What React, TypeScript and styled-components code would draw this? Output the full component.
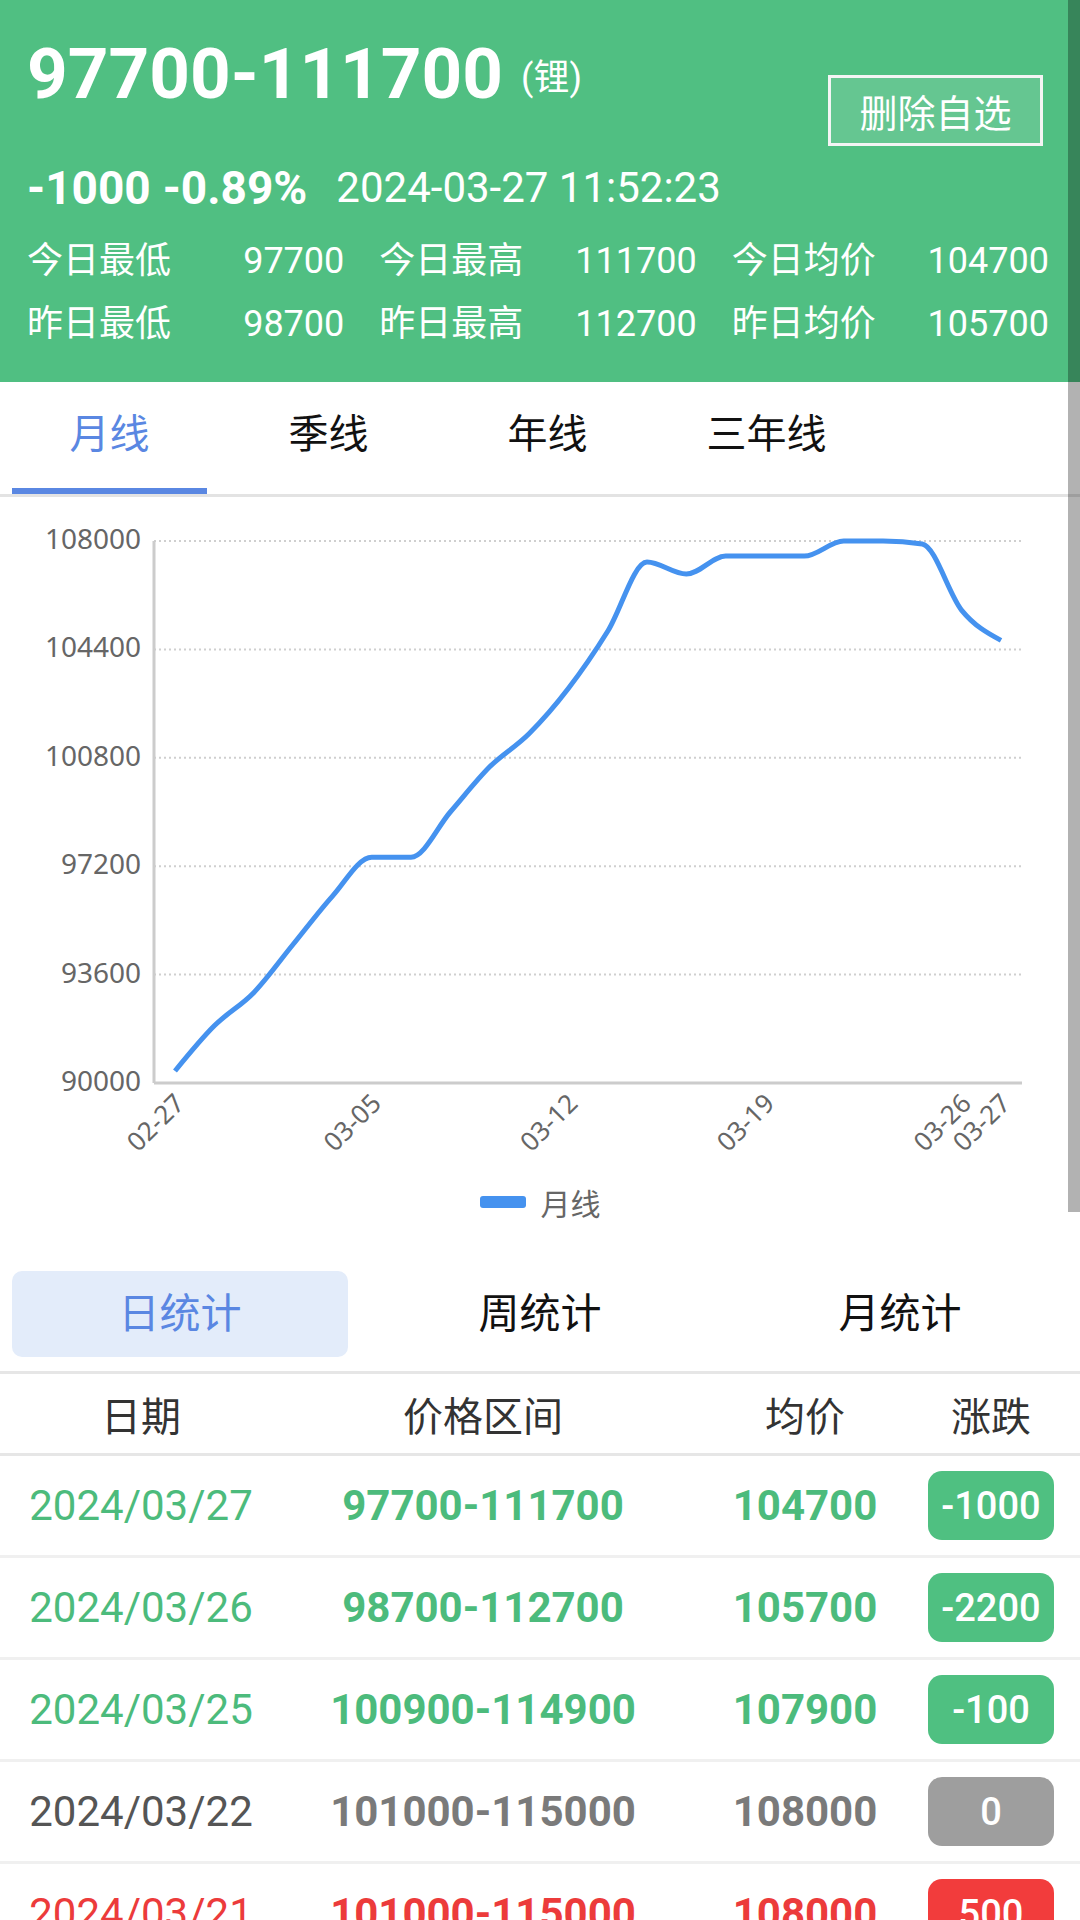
import React from "react";
import styled, { createGlobalStyle } from "styled-components";

const GREEN = "#50bf82";
const TEXT_GREEN = "#4cbb7c";
const RED = "#ec3b3b";
const BLUE = "#5a87e2";
const LINE_BLUE = "#4592ef";

const GlobalStyle = createGlobalStyle`
  html, body {
    margin: 0;
    padding: 0;
    background: #fff;
  }
  body {
    width: 1080px;
    height: 1920px;
    overflow: hidden;
    font-family: Roboto, "Noto Sans CJK SC", sans-serif;
    color: #111;
  }
`;

const Page = styled.div`
  width: 1080px;
`;

/* ---------- header ---------- */

const Header = styled.header`
  box-sizing: border-box;
  height: 382px;
  background: ${GREEN};
  color: #fff;
  padding: 24px 31px 0 27px;
`;

const TopRow = styled.div`
  display: flex;
  justify-content: space-between;
  align-items: flex-start;
`;

const Title = styled.h1`
  margin: 0;
  font-size: 71px;
  font-weight: 700;
  line-height: 100px;
  white-space: nowrap;
`;

const Unit = styled.span`
  font-size: 36px;
  font-weight: 400;
  margin-left: 18px;
  vertical-align: 8px;
`;

const Button = styled.button`
  box-sizing: border-box;
  margin-top: 51px;
  margin-right: 6px;
  width: 215px;
  height: 71px;
  border: 3px solid #f4f4f4;
  background: rgba(255, 255, 255, 0.12);
  color: #fff;
  font-family: inherit;
  font-size: 38px;
  padding: 0;
`;

const ChangeRow = styled.div`
  margin-top: 30px;
  height: 60px;
  display: flex;
  align-items: center;
  white-space: nowrap;
`;

const Change = styled.span`
  font-size: 46px;
  font-weight: 700;
  line-height: 60px;
  margin-right: 12px;
`;

const Time = styled.span`
  font-size: 42px;
  line-height: 60px;
  margin-left: 17px;
`;

const Stats = styled.div`
  margin-top: 12px;
  display: grid;
  grid-template-columns: repeat(3, 1fr);
  column-gap: 35px;
`;

const Stat = styled.div`
  display: flex;
  justify-content: space-between;
  font-size: 36px;
  line-height: 63px;
`;

/* ---------- period tabs ---------- */

const TabBar = styled.nav`
  display: flex;
  border-bottom: 3px solid #e3e3e3;
`;

const Tab = styled.div<{ $active?: boolean }>`
  flex: none;
  width: 219px;
  display: flex;
  flex-direction: column;
  align-items: stretch;
  font-size: 40px;
  color: ${(p) => (p.$active ? BLUE : "#111")};
`;

const TabLabel = styled.span`
  line-height: 106px;
  text-align: center;
`;

const TabLine = styled.span<{ $active?: boolean }>`
  height: 6px;
  margin: 0 12px;
  background: ${(p) => (p.$active ? BLUE : "transparent")};
`;

/* ---------- chart ---------- */

const ChartSvg = styled.svg`
  display: block;
  font-family: "Noto Sans", sans-serif;
`;

const Legend = styled.div`
  display: flex;
  justify-content: center;
  align-items: center;
  height: 70px;
  font-size: 30px;
  color: #666;
`;

const LegendMark = styled.span`
  width: 46px;
  height: 12px;
  border-radius: 3px;
  background: ${LINE_BLUE};
  margin-right: 15px;
`;

/* ---------- statistics segment ---------- */

const Segment = styled.div`
  display: grid;
  grid-template-columns: repeat(3, 1fr);
  padding: 34px 0 14px;
  border-bottom: 3px solid #e6e6e6;
`;

const SegItem = styled.div<{ $active?: boolean }>`
  margin: 0 12px;
  height: 86px;
  line-height: 86px;
  text-align: center;
  border-radius: 10px;
  font-size: 41px;
  background: ${(p) => (p.$active ? "#e3ecfa" : "transparent")};
  color: ${(p) => (p.$active ? BLUE : "#111")};
`;

/* ---------- table ---------- */

const Columns = `
  display: grid;
  grid-template-columns: 282px 402px 242px 130px;
  align-items: center;
  justify-items: center;
`;

const HeadRow = styled.div`
  ${Columns}
  height: 79px;
  border-bottom: 3px solid #e6e6e6;
  font-size: 40px;
  color: #333;
`;

const Row = styled.div`
  ${Columns}
  height: 99px;
  border-bottom: 3px solid #f0f0f0;
`;

const DateCell = styled.span<{ $color: string }>`
  font-size: 42px;
  color: ${(p) => p.$color};
`;

const NumCell = styled.span<{ $color: string }>`
  font-size: 42px;
  font-weight: 700;
  color: ${(p) => p.$color};
`;

const Badge = styled.span<{ $bg: string }>`
  width: 126px;
  height: 69px;
  border-radius: 14px;
  background: ${(p) => p.$bg};
  color: #fff;
  font-size: 38px;
  font-weight: 500;
  display: flex;
  align-items: center;
  justify-content: center;
`;

const ScrollThumb = styled.div`
  position: fixed;
  top: 0;
  right: 0;
  width: 12px;
  height: 1212px;
  background: rgba(0, 0, 0, 0.3);
`;

/* ---------- data ---------- */

const stats = [
  ["今日最低", "97700", "今日最高", "111700", "今日均价", "104700"],
  ["昨日最低", "98700", "昨日最高", "112700", "昨日均价", "105700"],
];

const tabs = ["月线", "季线", "年线", "三年线"];

const series = [
  90400, 91900, 93000, 94600, 96200, 97500, 97500, 99000, 100500, 101600,
  103100, 105000, 107300, 106900, 107500, 107500, 107500, 108000, 108000,
  107900, 105700, 104700,
];

const xTicks: [number, string][] = [
  [0, "02-27"],
  [5, "03-05"],
  [10, "03-12"],
  [15, "03-19"],
  [20, "03-26"],
  [21, "03-27"],
];

const yTicks = [108000, 104400, 100800, 97200, 93600, 90000];

type Tone = "up" | "down" | "flat";

const rows: { date: string; range: string; avg: string; diff: string; tone: Tone }[] = [
  { date: "2024/03/27", range: "97700-111700", avg: "104700", diff: "-1000", tone: "down" },
  { date: "2024/03/26", range: "98700-112700", avg: "105700", diff: "-2200", tone: "down" },
  { date: "2024/03/25", range: "100900-114900", avg: "107900", diff: "-100", tone: "down" },
  { date: "2024/03/22", range: "101000-115000", avg: "108000", diff: "0", tone: "flat" },
  { date: "2024/03/21", range: "101000-115000", avg: "108000", diff: "500", tone: "up" },
];

const toneColors: Record<Tone, { date: string; num: string; badge: string }> = {
  down: { date: TEXT_GREEN, num: TEXT_GREEN, badge: "#4fc081" },
  flat: { date: "#555", num: "#7a7a7a", badge: "#9e9e9e" },
  up: { date: RED, num: RED, badge: "#f23c3c" },
};

/* ---------- chart geometry ---------- */

const PLOT_L = 154;
const PLOT_R = 1022;
const PLOT_T = 541;
const PLOT_B = 1083;
const X0 = 175;
const X_STEP = (1001 - 175) / 21;

const yOf = (v: number) => PLOT_T + ((108000 - v) / 18000) * (PLOT_B - PLOT_T);
const xOf = (i: number) => X0 + i * X_STEP;

// monotone cubic interpolation, so flat stretches stay flat
function smoothPath(values: number[]) {
  const pts = values.map((v, i) => ({ x: xOf(i), y: yOf(v) }));
  const n = pts.length;
  const h = X_STEP;
  const s = pts.slice(0, -1).map((p, i) => (pts[i + 1].y - p.y) / h);
  const m: number[] = new Array(n).fill(0);
  for (let i = 1; i < n - 1; i++) {
    const a = s[i - 1];
    const b = s[i];
    if (a * b <= 0) m[i] = 0;
    else m[i] = (Math.sign(a) + Math.sign(b)) * Math.min(Math.abs(a), Math.abs(b), 0.5 * Math.abs((a + b) / 2));
  }
  m[0] = (3 * s[0] - m[1]) / 2;
  m[n - 1] = (3 * s[n - 2] - m[n - 2]) / 2;
  let d = `M${pts[0].x.toFixed(1)},${pts[0].y.toFixed(1)}`;
  for (let i = 0; i < n - 1; i++) {
    const p1 = pts[i];
    const p2 = pts[i + 1];
    const c1x = p1.x + h / 3;
    const c1y = p1.y + (m[i] * h) / 3;
    const c2x = p2.x - h / 3;
    const c2y = p2.y - (m[i + 1] * h) / 3;
    d += ` C${c1x.toFixed(1)},${c1y.toFixed(1)} ${c2x.toFixed(1)},${c2y.toFixed(1)} ${p2.x.toFixed(1)},${p2.y.toFixed(1)}`;
  }
  return d;
}

const PriceChart: React.FC = () => (
  <ChartSvg width={1080} height={670} viewBox="0 497 1080 670">
    {yTicks.map((v) => (
      <g key={v}>
        {v !== 90000 && (
          <line
            x1={PLOT_L}
            x2={PLOT_R}
            y1={yOf(v)}
            y2={yOf(v)}
            stroke="#cfcfcf"
            strokeWidth={2}
            strokeDasharray="2 3"
          />
        )}
        <text x={141} y={yOf(v) + 8} textAnchor="end" fontSize={28} fill="#666">
          {v}
        </text>
      </g>
    ))}
    <line x1={PLOT_L} x2={PLOT_L} y1={PLOT_T} y2={PLOT_B} stroke="#cccccc" strokeWidth={3} />
    <line x1={PLOT_L} x2={PLOT_R} y1={PLOT_B} y2={PLOT_B} stroke="#cccccc" strokeWidth={3} />
    {xTicks.map(([i, label]) => {
      const ax = xOf(i) + 11;
      const ay = 1105;
      return (
        <text
          key={label}
          x={ax}
          y={ay}
          textAnchor="end"
          fontSize={26}
          fill="#666"
          transform={`rotate(-45 ${ax} ${ay})`}
        >
          {label}
        </text>
      );
    })}
    <path
      d={smoothPath(series)}
      fill="none"
      stroke={LINE_BLUE}
      strokeWidth={5}
      strokeLinejoin="round"
    />
  </ChartSvg>
);

const App: React.FC = () => {
  return (
    <Page>
      <GlobalStyle />
      <Header>
        <TopRow>
          <div>
            <Title>
              97700-111700<Unit>(锂)</Unit>
            </Title>
            <ChangeRow>
              <Change>-1000</Change>
              <Change>-0.89%</Change>
              <Time>2024-03-27 11:52:23</Time>
            </ChangeRow>
          </div>
          <Button>删除自选</Button>
        </TopRow>
        <Stats>
          {stats.map((r) =>
            [0, 2, 4].map((k) => (
              <Stat key={r[k]}>
                <span>{r[k]}</span>
                <span>{r[k + 1]}</span>
              </Stat>
            ))
          )}
        </Stats>
      </Header>

      <TabBar>
        {tabs.map((t, i) => (
          <Tab key={t} $active={i === 0}>
            <TabLabel>{t}</TabLabel>
            <TabLine $active={i === 0} />
          </Tab>
        ))}
      </TabBar>

      <PriceChart />
      <Legend>
        <LegendMark />
        月线
      </Legend>

      <Segment>
        <SegItem $active>日统计</SegItem>
        <SegItem>周统计</SegItem>
        <SegItem>月统计</SegItem>
      </Segment>

      <HeadRow>
        <span>日期</span>
        <span>价格区间</span>
        <span>均价</span>
        <span>涨跌</span>
      </HeadRow>
      {rows.map((r) => {
        const c = toneColors[r.tone];
        return (
          <Row key={r.date}>
            <DateCell $color={c.date}>{r.date}</DateCell>
            <NumCell $color={c.num}>{r.range}</NumCell>
            <NumCell $color={c.num}>{r.avg}</NumCell>
            <Badge $bg={c.badge}>{r.diff}</Badge>
          </Row>
        );
      })}
      <ScrollThumb />
    </Page>
  );
};

export default App;
